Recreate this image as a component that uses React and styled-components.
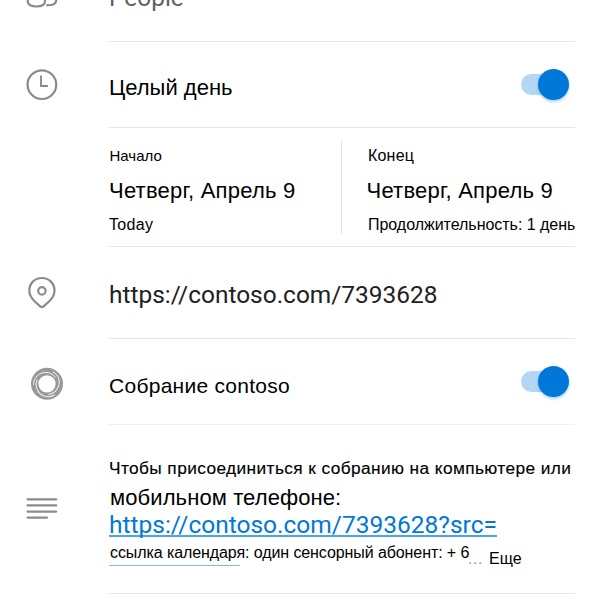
import React from 'react';
import styled, { createGlobalStyle } from 'styled-components';

const GlobalStyle = createGlobalStyle`
  body { margin: 0; background: #fff; overflow: hidden; }
  *, *::before, *::after { box-sizing: border-box; }
`;

const Screen = styled.main`
  width: 599px;
  height: 599px;
  overflow: hidden;
  display: flex;
  flex-direction: column;
  background: #fff;
  color: #000;
  font-family: "Liberation Sans", Arial, sans-serif;
`;

const Row = styled.section`
  flex: none;
  display: grid;
  grid-template-columns: 109px 466px;
  height: ${(p) => p.$height}px;
`;

const IconCell = styled.div`
  padding: ${(p) => p.$top}px 0 0 ${(p) => p.$left || 24}px;
  svg { display: block; }
`;

const Content = styled.div`
  display: flex;
  justify-content: space-between;
  align-items: flex-start;
  border-bottom: 1px solid ${(p) => p.$line || '#e6e6e6'};
`;

const Label = styled.div`
  margin-top: ${(p) => p.$top || 0}px;
  margin-left: ${(p) => p.$indent || 0}px;
  font-size: ${(p) => p.$size || 22}px;
  line-height: 30px;
  letter-spacing: ${(p) => p.$spacing || 0}px;
  white-space: nowrap;
`;

const LatinLabel = styled(Label)`
  font-family: Roboto, sans-serif;
  font-size: 24.45px;
  color: ${(p) => p.$color || '#212121'};
`;

const Switch = styled.button.attrs({ type: 'button', role: 'switch', 'aria-checked': true })`
  display: flex;
  justify-content: flex-end;
  align-items: center;
  width: 48px;
  height: 21px;
  margin: ${(p) => p.$top}px 5.6px 0 0;
  padding: 0;
  border: 0;
  border-radius: 11px;
  background: #b2d6f4;
`;

const Knob = styled.span`
  flex: none;
  width: 31px;
  height: 31px;
  border-radius: 50%;
  background: #0078d9;
  box-shadow: 0 2px 3px rgba(0, 120, 215, 0.3);
`;

const Dates = styled(Content)`
  justify-content: flex-start;
`;

const DateColumn = styled.div`
  display: flex;
  flex-direction: column;
  width: 232px;
`;

const EndColumn = styled(DateColumn)`
  height: 94px;
  margin-top: 12px;
  border-left: 1px solid #e4e4e4;
`;

const Description = styled(Content)`
  flex-direction: column;
  justify-content: flex-start;
`;

const Intro = styled(Label)`
  -webkit-text-stroke: 0.15px #000;
`;

const Link = styled.a`
  margin-top: -3px;
  height: 27px;
  border-bottom: 2px solid #4ba3e8;
  color: #0078d7;
  font: 24.5px/29px Roboto, sans-serif;
  white-space: nowrap;
`;

const Footer = styled.div`
  display: flex;
  align-items: flex-start;
  margin-top: 1px;
`;

const Reference = styled.div`
  width: 359px;
  height: 29px;
  padding-left: 1px;
  font-size: 16px;
  line-height: 30px;
  letter-spacing: -0.09px;
  white-space: nowrap;
  &::after {
    content: "";
    display: block;
    width: 131px;
    height: 1px;
    margin: -3px 0 0 -1px;
    background: #82b9e8;
  }
`;

const Ellipsis = styled.span`
  width: 21px;
  margin-top: 5px;
  color: #999;
  font: 17px/30px Roboto, sans-serif;
  letter-spacing: 0.5px;
`;

const More = styled.span`
  margin-top: 6px;
  font-size: 16px;
  line-height: 30px;
`;

const Icon = ({ width = 36, height = 36, children }) => (
  <svg width={width} height={height} viewBox={`0 0 ${width} ${height}`} fill="none" stroke="#8b8b8b" strokeWidth="2.2" strokeLinecap="round" strokeLinejoin="round">
    {children}
  </svg>
);

const PeopleIcon = () => (
  <Icon height={10}>
    <path d="M3.8 0V1C3.8 5 7.4 6.5 12.3 6.5S21 5 21 1V0M23.2 5.2C28.5 5.6 32.2 4 32.2 0" />
  </Icon>
);

const ClockIcon = () => (
  <Icon>
    <circle cx="17.9" cy="17.7" r="14.3" />
    <path d="M17 9.5V19H23" strokeLinecap="square" strokeLinejoin="miter" strokeWidth="1.9" />
  </Icon>
);

const PinIcon = () => (
  <Icon>
    <path d="M17.9 3C10.6 3 5.3 8.5 5.3 15.6C5.3 20.2 7.5 23.4 10.5 26.2L16.2 31.4C17.3 32.4 18.5 32.4 19.6 31.4L25.3 26.2C28.3 23.4 30.5 20.2 30.5 15.6C30.5 8.5 25.2 3 17.9 3Z" />
    <circle cx="17.9" cy="15.9" r="3.7" />
  </Icon>
);

const swirlAngles = [0, 120, 240];

const SwirlIcon = () => (
  <Icon>
    <circle cx="18" cy="17.8" r="12.3" stroke="#999" strokeWidth="7.4" />
    <g stroke="#f2f2f2" strokeWidth="1">
      {swirlAngles.map((angle) => (
        <path key={angle} transform={`rotate(${angle} 18 17.8)`} d="M4.6 18.5C4.6 10.5 11.2 5.8 18 6.5C21.7 6.9 24.4 8.8 26.2 11.2" />
      ))}
    </g>
  </Icon>
);

const LinesIcon = () => (
  <Icon height={26}>
    <path d="M3.6 3.3H32.2M3.6 9.4H32.2M3.6 15.6H32.2M3.6 21.6H23" />
  </Icon>
);

export default function App() {
  return (
    <Screen>
      <GlobalStyle />
      <Row $height={42}>
        <IconCell $top={0}><PeopleIcon /></IconCell>
        <Content><LatinLabel $top={-17} $color="#616161">People</LatinLabel></Content>
      </Row>
      <Row $height={86}>
        <IconCell $top={25}><ClockIcon /></IconCell>
        <Content>
          <Label $top={31}>Целый день</Label>
          <Switch $top={32} aria-label="Целый день"><Knob /></Switch>
        </Content>
      </Row>
      <Row $height={119}>
        <IconCell $top={0} />
        <Dates>
          <DateColumn>
            <Label $top={13} $indent={0.5} $size={15}>Начало</Label>
            <Label $top={5} $spacing={0.22}>Четверг, Апрель 9</Label>
            <Label $top={4} $size={16} $spacing={0.3}>Today</Label>
          </DateColumn>
          <EndColumn>
            <Label $top={1} $indent={26} $size={16} $spacing={0.2}>Конец</Label>
            <Label $top={5} $indent={24.5} $spacing={0.22}>Четверг, Апрель 9</Label>
            <Label $top={4} $indent={26} $size={16} $spacing={-0.03}>Продолжительность: 1 день</Label>
          </EndColumn>
        </Dates>
      </Row>
      <Row $height={92}>
        <IconCell $top={28}><PinIcon /></IconCell>
        <Content><LatinLabel $top={33}>https://contoso.com/7393628</LatinLabel></Content>
      </Row>
      <Row $height={86}>
        <IconCell $top={27} $left={29}><SwirlIcon /></IconCell>
        <Content $line="#f0f0f0">
          <Label $top={32} $size={21} $spacing={0.27}>Собрание contoso</Label>
          <Switch $top={32} aria-label="Собрание contoso"><Knob /></Switch>
        </Content>
      </Row>
      <Row $height={169}>
        <IconCell $top={71}><LinesIcon /></IconCell>
        <Description>
          <Intro $top={28} $size={17.3} $spacing={0.4}>Чтобы присоединиться к собранию на компьютере или</Intro>
          <Label $indent={1} $spacing={0.1}>мобильном телефоне:</Label>
          <Link>https://contoso.com/7393628?src=</Link>
          <Footer>
            <Reference>ссылка календаря: один сенсорный абонент: + 6</Reference>
            <Ellipsis>...</Ellipsis>
            <More>Еще</More>
          </Footer>
        </Description>
      </Row>
    </Screen>
  );
}
